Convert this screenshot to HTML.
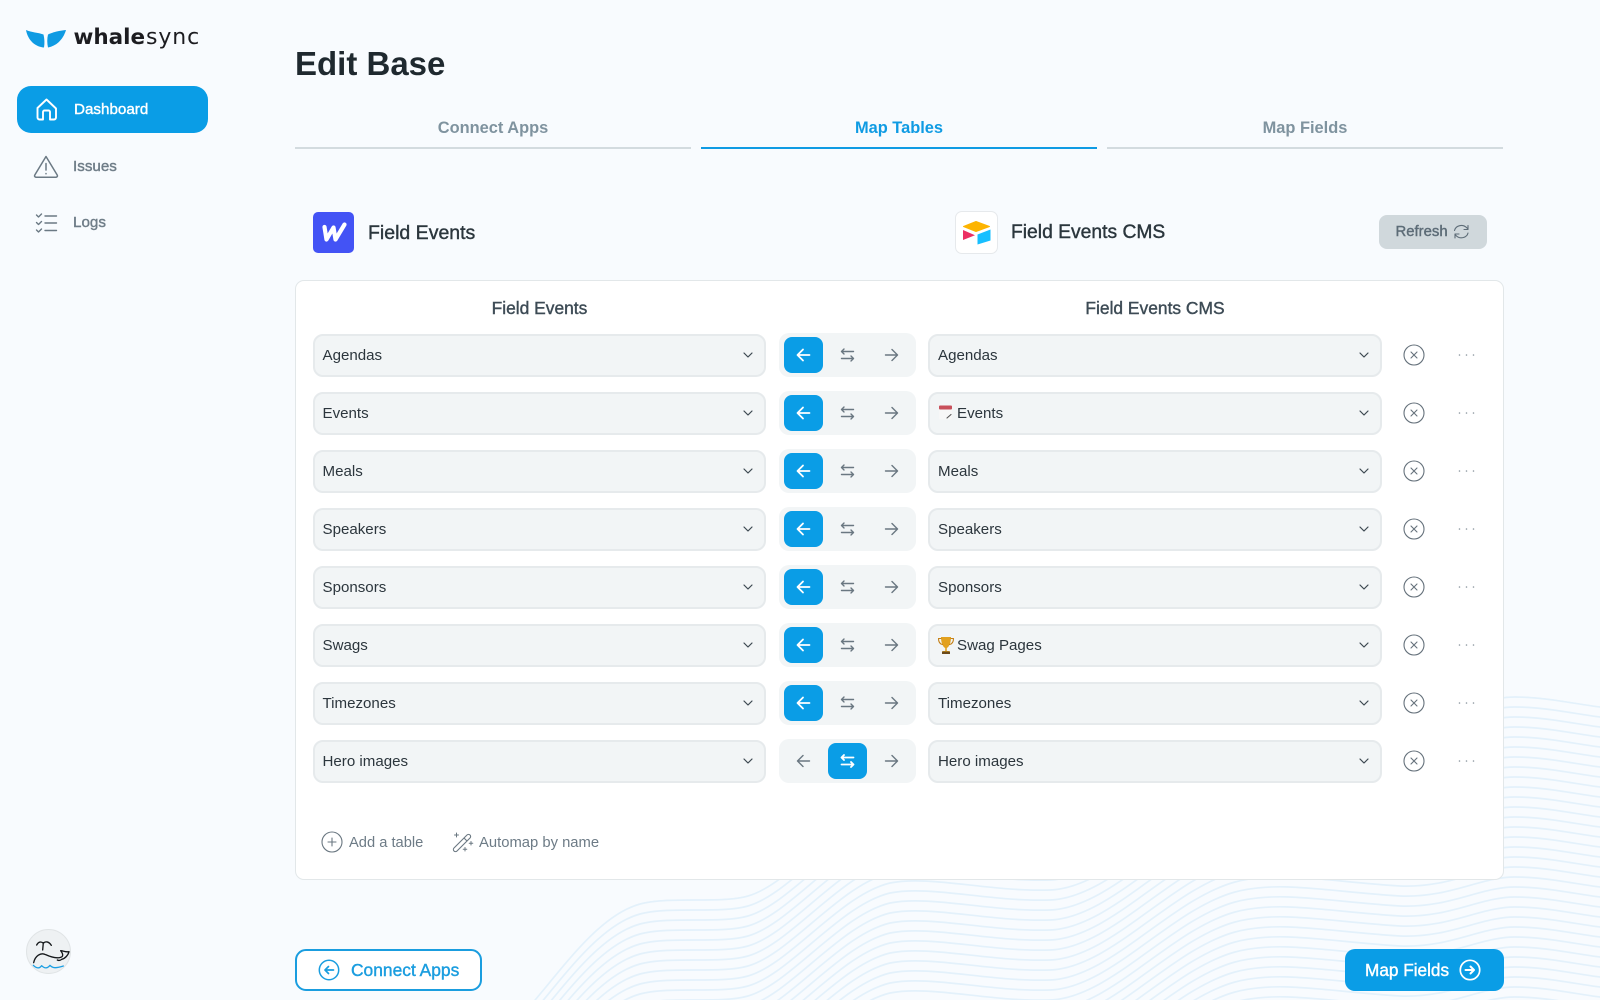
<!DOCTYPE html>
<html lang="en"><head><meta charset="utf-8"><title>Edit Base</title>
<style>
*{box-sizing:border-box}
html,body{margin:0;padding:0;width:1600px;height:1000px;overflow:hidden}
body{position:relative;background:#f8fbfe;font-family:"Liberation Sans",sans-serif;color:#2f3a42}
.a{position:absolute;white-space:nowrap}
.med{-webkit-text-stroke:.4px currentColor}
svg{position:absolute;overflow:visible;fill:none;stroke-linecap:round;stroke-linejoin:round}
.tab{position:absolute;top:116px;height:33px;width:396px;border-bottom:2px solid #d3dbdf;text-align:center;font-size:16.4px;font-weight:700;line-height:24px;color:#7f939f}
.tab.on{color:#0f9be3;border-color:#0f9be3}
.sel{position:absolute;height:43px;background:#f2f5f6;border:2px solid #e6eaec;border-radius:10px;font-size:15.1px;line-height:39px;padding-left:8px;color:#2c363d}
.l{left:312.5px;width:453.5px}.r{left:928px;width:454px}
.tg{position:absolute;left:779px;width:137px;height:44px;background:#f2f5f6;border-radius:10px}
.bt{position:absolute;top:4px;width:39.5px;height:36px;border-radius:8px}
.bt.on{background:#0a9de6}
</style></head><body>

<svg width="1600" height="1000" viewBox="0 0 1600 1000" style="left:0;top:0;overflow:hidden">
<defs>
<path id="w" d="M535 1000C565 965 600 915 640 904C670 896 720 904 748 896C790 884 840 815 890 803C930 795 990 812 1050 810C1110 808 1170 730 1235 712C1280 700 1330 712 1400 716C1450 718 1480 697 1515 697C1545 697 1575 704 1600 707"/>
<pattern id="wp" patternUnits="userSpaceOnUse" x="0" y="0" width="1600" height="10">
<g stroke="#e3f1fb" stroke-width="1.700" fill="none">
<use href="#w" y="-680"/><use href="#w" y="-690"/><use href="#w" y="-700"/><use href="#w" y="-710"/><use href="#w" y="-720"/><use href="#w" y="-730"/><use href="#w" y="-740"/><use href="#w" y="-750"/><use href="#w" y="-760"/><use href="#w" y="-770"/><use href="#w" y="-780"/><use href="#w" y="-790"/><use href="#w" y="-800"/><use href="#w" y="-810"/><use href="#w" y="-820"/><use href="#w" y="-830"/><use href="#w" y="-840"/><use href="#w" y="-850"/><use href="#w" y="-860"/><use href="#w" y="-870"/><use href="#w" y="-880"/><use href="#w" y="-890"/><use href="#w" y="-900"/><use href="#w" y="-910"/><use href="#w" y="-920"/><use href="#w" y="-930"/><use href="#w" y="-940"/><use href="#w" y="-950"/><use href="#w" y="-960"/><use href="#w" y="-970"/><use href="#w" y="-980"/><use href="#w" y="-990"/><use href="#w" y="-1000"/><use href="#w" y="-1010"/>
</g>
</pattern>
<symbol id="la" viewBox="0 0 40 36" overflow="visible"><path d="M26 18H14M19.500 12.500L14 18l5.500 5.500"/></symbol>
<symbol id="ra" viewBox="0 0 40 36" overflow="visible"><path d="M14 18H26M20.500 12.500L26 18l-5.500 5.500"/></symbol>
<symbol id="sw" viewBox="0 0 40 36" overflow="visible"><path d="M26 14.500H14M16.500 12L14 14.500l2.500 2.500M14 21.500H26M23.500 19L26 21.500 23.500 24"/></symbol>
<symbol id="cv" viewBox="0 0 12 8" overflow="visible"><path d="M2 2L6 6l4-4"/></symbol>
<symbol id="xc" viewBox="0 0 24 24" overflow="visible"><circle cx="12" cy="12" r="10"/><path d="M9 9l6 6M15 9l-6 6"/></symbol>
</defs>
<path fill="url(#wp)" d="M534 1000C564 964 599 914 640 903C670 895 720 903 748 895C790 883 840 814 890 802C930 794 990 811 1050 809C1110 807 1170 729 1235 711C1280 699 1330 711 1400 715C1450 717 1480 696 1515 696C1545 696 1575 703 1600 706L1600 1000Z"/>
</svg>

<!-- logo -->
<svg width="80" height="60" style="left:0;top:0">
<path d="M26 30C32 32.500 38 32.500 43.500 34.500C44.500 39 44.800 43 44 47.500C36 47 28 41 26 30Z" fill="#0f9be3"/>
<path d="M66 30C60 30.500 53 32 48 34.500C47 39 47 43 48 47.500C56 46 63 40 66 30Z" fill="#0f9be3"/>
</svg>
<div class="a" style="left:73.500px;top:24px;font-family:'DejaVu Sans',sans-serif;font-size:21.500px;line-height:28px;font-weight:700;color:#1c1c20">whale</div>
<div class="a" style="left:146px;top:24px;font-family:'DejaVu Sans',sans-serif;font-size:22px;line-height:28px;letter-spacing:.9px;color:#1c1c20">sync</div>

<!-- nav -->
<div class="a" style="left:17px;top:86px;width:191px;height:47px;background:#0a9de6;border-radius:14px"></div>
<svg width="26" height="26" style="left:34px;top:96px" stroke="#fff" stroke-width="1.900"><path d="M3.500 12L12.500 3.500 22 12.500V21.500a2 2 0 0 1-2 2h-4V16a1.500 1.500 0 0 0-1.500-1.500h-4A1.500 1.500 0 0 0 9 16v7.500H5.500a2 2 0 0 1-2-2V12"/></svg>
<div class="a med" style="left:74px;top:100px;font-size:15.2px;line-height:20px;color:#fff">Dashboard</div>
<svg width="26" height="26" style="left:33px;top:154px" stroke="#6b7984" stroke-width="1.500"><path d="M13 2.500L1.800 21a1.500 1.500 0 0 0 1.300 2.300h19.800a1.500 1.500 0 0 0 1.300-2.300L13 2.500Z"/><path d="M13 9.500v6.500M13 19.500v.3"/></svg>
<div class="a med" style="left:73px;top:157px;font-size:15.2px;line-height:20px;color:#6f7d88">Issues</div>
<svg width="26" height="22" style="left:35px;top:212px" stroke="#6b7984" stroke-width="1.400"><path d="M1.500 3l2 2 3-3M1.500 10.500l2 2 3-3M1.500 18l2 2 3-3M10 4h11.500M10 11h11.500M10 18.500h11.500"/></svg>
<div class="a med" style="left:73px;top:213px;font-size:15.2px;line-height:20px;color:#6f7d88">Logs</div>

<!-- avatar -->
<div class="a" style="left:26px;top:929px;width:45px;height:45px;border-radius:50%;background:#eef1f3;border:1.500px solid #e0e4e6"></div>
<svg width="120" height="100" style="left:0;top:900px" viewBox="0 0 360 300">
<g stroke="#15181b" stroke-width="4">
<path d="M110 135C116 124 124 124 130 130C136 123 146 124 154 136M130 128L128 150"/>
<path d="M101 188C105 168 122 156 137 164C150 170 168 176 182 172C190 170 190 162 182 152C190 152 196 157 207 155C205 165 195 176 185 178C180 182 176 182 172 180"/>
</g>
<path d="M100 196C110 206 118 206 125 197C134 206 142 206 150 196C158 205 168 205 190 198" stroke="#1c9fe3" stroke-width="4"/>
</svg>

<!-- header -->
<div class="a" style="left:295px;top:44px;font-size:33px;line-height:40px;font-weight:700;color:#1f292f">Edit Base</div>
<div class="tab" style="left:295px">Connect Apps</div>
<div class="tab on" style="left:701px">Map Tables</div>
<div class="tab" style="left:1107px">Map Fields</div>

<!-- app row -->
<div class="a" style="left:313px;top:212px;width:41px;height:41px;border-radius:5px;background:#4353f5"></div>
<svg width="41" height="41" style="left:313px;top:212px" stroke="#fff" stroke-width="4.200"><path d="M11.500 15L13.500 27.500L20.500 15.500L22.500 27.500L31.500 12.500"/></svg>
<div class="a med" style="left:368px;top:220.500px;font-size:19.5px;line-height:24px;color:#2b363d">Field Events</div>

<div class="a" style="left:954.500px;top:211px;width:43px;height:43px;border-radius:7px;background:#fff;border:1.500px solid #e6e9ec"></div>
<svg width="43" height="43" style="left:954.500px;top:211px">
<path d="M21 10.500L34.500 15.500L21 20.500L8.500 15.500Z" fill="#fdb400" stroke="#fdb400"/>
<path d="M22.500 23.500L35.500 18.500V29.500L22.500 33.500Z" fill="#18bfff"/>
<path d="M8 19L20 24.300 8 29Z" fill="#ec2f63"/>
</svg>
<div class="a med" style="left:1011px;top:220.500px;font-size:19.3px;line-height:24px;color:#2b363d">Field Events CMS</div>

<div class="a" style="left:1378.500px;top:215px;width:108px;height:34px;border-radius:8px;background:#d0d8dc"></div>
<div class="a med" style="left:1395.500px;top:222px;font-size:14.900px;line-height:20px;color:#5d6c77">Refresh</div>
<svg width="18" height="18" style="left:1453px;top:223px" stroke="#5d6c77" stroke-width="1.100"><path d="M1.500 7.500C2.500 3 9 .5 13.500 4.500L15 6M15 2.500V6.500H11M15 10C14 14.500 7.500 16.500 3.500 13L2 11.500M2 15V11h4"/></svg>

<!-- card -->
<div class="a" style="left:295px;top:280px;width:1208.500px;height:599.500px;background:#fff;border:1.500px solid #e2e7e9;border-radius:9px"></div>
<div class="a med" style="left:312px;width:455px;top:298px;text-align:center;font-size:17.400px;line-height:20px;color:#3d4b55">Field Events</div>
<div class="a med" style="left:928px;width:454px;top:298px;text-align:center;font-size:17.400px;line-height:20px;color:#3d4b55">Field Events CMS</div>

<!-- rows -->
<div class="sel l" style="top:333.500px">Agendas</div><div class="sel l" style="top:391.500px">Events</div><div class="sel l" style="top:449.500px">Meals</div><div class="sel l" style="top:507.500px">Speakers</div><div class="sel l" style="top:565.500px">Sponsors</div><div class="sel l" style="top:623.500px">Swags</div><div class="sel l" style="top:681.500px">Timezones</div><div class="sel l" style="top:739.500px">Hero images</div>
<div class="sel r" style="top:333.500px">Agendas</div><div class="sel r" style="top:391.500px;padding-left:27px">Events</div><div class="sel r" style="top:449.500px">Meals</div><div class="sel r" style="top:507.500px">Speakers</div><div class="sel r" style="top:565.500px">Sponsors</div><div class="sel r" style="top:623.500px;padding-left:27px">Swag Pages</div><div class="sel r" style="top:681.500px">Timezones</div><div class="sel r" style="top:739.500px">Hero images</div>

<div class="tg" style="top:333px"><div class="bt on" style="left:4.500px"></div></div>
<div class="tg" style="top:391px"><div class="bt on" style="left:4.500px"></div></div>
<div class="tg" style="top:449px"><div class="bt on" style="left:4.500px"></div></div>
<div class="tg" style="top:507px"><div class="bt on" style="left:4.500px"></div></div>
<div class="tg" style="top:565px"><div class="bt on" style="left:4.500px"></div></div>
<div class="tg" style="top:623px"><div class="bt on" style="left:4.500px"></div></div>
<div class="tg" style="top:681px"><div class="bt on" style="left:4.500px"></div></div>
<div class="tg" style="top:739px"><div class="bt on" style="left:48.500px"></div></div>

<svg width="1600" height="1000" viewBox="0 0 1600 1000" style="left:0;top:0;overflow:hidden" stroke-width="1.500">
<g stroke="#fff" stroke-width="1.800">
<use href="#la" x="783.500" y="337" width="40" height="36"/><use href="#la" x="783.500" y="395" width="40" height="36"/><use href="#la" x="783.500" y="453" width="40" height="36"/><use href="#la" x="783.500" y="511" width="40" height="36"/><use href="#la" x="783.500" y="569" width="40" height="36"/><use href="#la" x="783.500" y="627" width="40" height="36"/><use href="#la" x="783.500" y="685" width="40" height="36"/>
<use href="#sw" x="827.500" y="743" width="40" height="36"/>
</g>
<g stroke="#6a7781" stroke-width="1.400">
<use href="#la" x="783.500" y="743" width="40" height="36"/>
<use href="#sw" x="827.500" y="337" width="40" height="36"/><use href="#sw" x="827.500" y="395" width="40" height="36"/><use href="#sw" x="827.500" y="453" width="40" height="36"/><use href="#sw" x="827.500" y="511" width="40" height="36"/><use href="#sw" x="827.500" y="569" width="40" height="36"/><use href="#sw" x="827.500" y="627" width="40" height="36"/><use href="#sw" x="827.500" y="685" width="40" height="36"/>
<use href="#ra" x="871.500" y="337" width="40" height="36"/><use href="#ra" x="871.500" y="395" width="40" height="36"/><use href="#ra" x="871.500" y="453" width="40" height="36"/><use href="#ra" x="871.500" y="511" width="40" height="36"/><use href="#ra" x="871.500" y="569" width="40" height="36"/><use href="#ra" x="871.500" y="627" width="40" height="36"/><use href="#ra" x="871.500" y="685" width="40" height="36"/><use href="#ra" x="871.500" y="743" width="40" height="36"/>
</g>
<g stroke="#3c4750" stroke-width="1.200">
<use href="#cv" x="742" y="351" width="12" height="8"/><use href="#cv" x="742" y="409" width="12" height="8"/><use href="#cv" x="742" y="467" width="12" height="8"/><use href="#cv" x="742" y="525" width="12" height="8"/><use href="#cv" x="742" y="583" width="12" height="8"/><use href="#cv" x="742" y="641" width="12" height="8"/><use href="#cv" x="742" y="699" width="12" height="8"/><use href="#cv" x="742" y="757" width="12" height="8"/>
<use href="#cv" x="1358" y="351" width="12" height="8"/><use href="#cv" x="1358" y="409" width="12" height="8"/><use href="#cv" x="1358" y="467" width="12" height="8"/><use href="#cv" x="1358" y="525" width="12" height="8"/><use href="#cv" x="1358" y="583" width="12" height="8"/><use href="#cv" x="1358" y="641" width="12" height="8"/><use href="#cv" x="1358" y="699" width="12" height="8"/><use href="#cv" x="1358" y="757" width="12" height="8"/>
</g>
<g stroke="#66727c" stroke-width="1.100">
<use href="#xc" x="1402" y="343" width="24" height="24"/><use href="#xc" x="1402" y="401" width="24" height="24"/><use href="#xc" x="1402" y="459" width="24" height="24"/><use href="#xc" x="1402" y="517" width="24" height="24"/><use href="#xc" x="1402" y="575" width="24" height="24"/><use href="#xc" x="1402" y="633" width="24" height="24"/><use href="#xc" x="1402" y="691" width="24" height="24"/><use href="#xc" x="1402" y="749" width="24" height="24"/>
</g>
<g fill="#8a959d">
<circle cx="1459.500" cy="355" r=".8"/><circle cx="1466.500" cy="355" r=".8"/><circle cx="1473.500" cy="355" r=".8"/>
<circle cx="1459.500" cy="413" r=".8"/><circle cx="1466.500" cy="413" r=".8"/><circle cx="1473.500" cy="413" r=".8"/>
<circle cx="1459.500" cy="471" r=".8"/><circle cx="1466.500" cy="471" r=".8"/><circle cx="1473.500" cy="471" r=".8"/>
<circle cx="1459.500" cy="529" r=".8"/><circle cx="1466.500" cy="529" r=".8"/><circle cx="1473.500" cy="529" r=".8"/>
<circle cx="1459.500" cy="587" r=".8"/><circle cx="1466.500" cy="587" r=".8"/><circle cx="1473.500" cy="587" r=".8"/>
<circle cx="1459.500" cy="645" r=".8"/><circle cx="1466.500" cy="645" r=".8"/><circle cx="1473.500" cy="645" r=".8"/>
<circle cx="1459.500" cy="703" r=".8"/><circle cx="1466.500" cy="703" r=".8"/><circle cx="1473.500" cy="703" r=".8"/>
<circle cx="1459.500" cy="761" r=".8"/><circle cx="1466.500" cy="761" r=".8"/><circle cx="1473.500" cy="761" r=".8"/>
</g>
<!-- calendar emoji -->
<rect x="939" y="405.500" width="13" height="14" rx="1.500" fill="#f7f7f7" stroke="none"/>
<rect x="939" y="405.500" width="13" height="4" rx="1" fill="#c8505b" stroke="none"/>
<path d="M947 418l4-3.500" stroke="#555" stroke-width="1.100"/>
<!-- trophy emoji -->
<path d="M941 637H951C951 643 949 647 946.800 648V651H949.500V653.500H942.500V651H945.200V648C943 647 941 643 941 637Z" fill="#e2a11f" stroke="none"/>
<path d="M941 638.500H938.500C938.500 642 940 644 942.500 644.500M951 638.500H953.500C953.500 642 952 644 949.500 644.500" stroke="#c47f15" stroke-width="1.100"/>
<rect x="942" y="651.500" width="8" height="2.500" fill="#6b4a1a" stroke="none"/>
<!-- footer icons -->
<g stroke="#6a7781" stroke-width="1.100">
<circle cx="332" cy="842" r="10"/><path d="M332 838v8M328 842h8"/>
<path d="M454 848L467 835a2.100 2.100 0 0 1 3 3L457 851a2.100 2.100 0 0 1-3-3ZM464 838l3 3"/>
<path d="M456.500 833v4M454.500 835h4M471 841.500v3.500M469.200 843.200h3.600M465 847.500v3.500M463.200 849.200h3.600" stroke-width="1"/>
</g>
</svg>

<div class="a" style="left:349px;top:832.500px;font-size:14.700px;line-height:20px;color:#6d7b86">Add a table</div>
<div class="a" style="left:479px;top:832.500px;font-size:14.800px;line-height:20px;color:#6d7b86">Automap by name</div>

<!-- footer buttons -->
<div class="a" style="left:295px;top:949px;width:186.500px;height:42px;background:#fff;border:2px solid #1a9ddf;border-radius:11px"></div>
<svg width="24" height="24" style="left:317px;top:958px" stroke="#1a9ddf" stroke-width="1.500"><circle cx="12" cy="12" r="9.700"/><path d="M16.500 12H8M11.500 8.500L8 12l3.500 3.500" stroke-width="1.700"/></svg>
<div class="a med" style="left:351px;top:958.500px;font-size:17.400px;line-height:22px;color:#1a9ddf">Connect Apps</div>

<div class="a" style="left:1344.500px;top:949px;width:159px;height:42px;background:#0a9de6;border-radius:10px"></div>
<div class="a med" style="left:1365px;top:958.500px;font-size:17.200px;line-height:22px;color:#fff">Map Fields</div>
<svg width="24" height="24" style="left:1458px;top:958px" stroke="#fff" stroke-width="1.700"><circle cx="12" cy="12" r="9.700"/><path d="M7.500 12H16M12.500 8.500L16 12l-3.500 3.500" stroke-width="2"/></svg>

</body></html>
